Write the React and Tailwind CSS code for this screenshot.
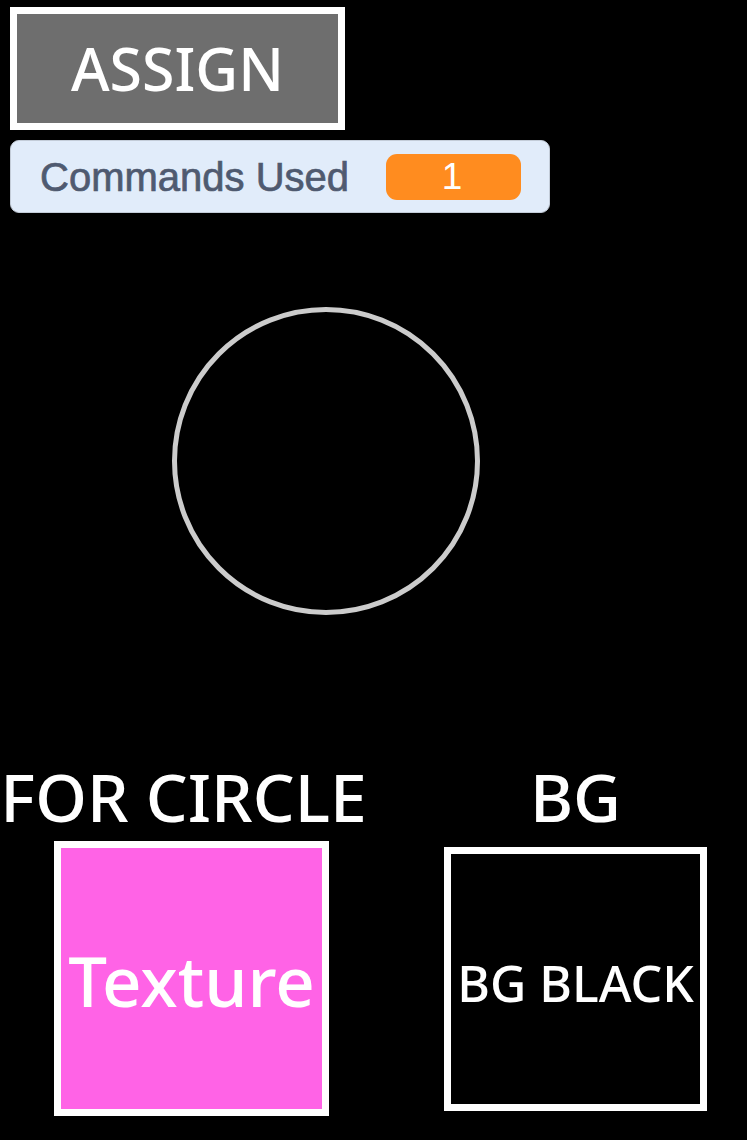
import React from 'react';

const display = { fontFamily: '"Noto Sans", "Open Sans", sans-serif' };

// bloc d'action en haut
function AssignButton() {
  return (
    <button
      className="ml-[10px] mt-[7px] flex h-[123px] w-[335px] items-center justify-center border-[7px] border-white bg-[#6e6e6e] text-[59px] font-medium leading-none text-white"
      style={display}
    >
      ASSIGN
    </button>
  );
}

function CommandsUsed({ count }) {
  return (
    <div
      className="ml-[10px] mt-[10px] flex h-[73px] w-[540px] items-center rounded-[9px] border border-[#c3ccd8] bg-[#e1ecfa] pl-[29px]"
      style={{ fontFamily: '"Liberation Sans", Arial, sans-serif' }}
    >
      <span className="text-[40px] leading-none text-[#4f5a70] [-webkit-text-stroke:0.7px_#4f5a70]">Commands Used</span>
      <span className="ml-[37px] flex h-[46px] w-[135px] items-center justify-center rounded-[11px] bg-[#ff8c1f] pr-[3px] text-[37px] leading-none text-white">
        {count}
      </span>
    </div>
  );
}

export default function App() {
  return (
    <div className="flex min-h-[1140px] w-full flex-col overflow-hidden bg-black">
      <AssignButton />
      <CommandsUsed count={1} />

      {/* le cercle */}
      <div className="ml-[172px] mt-[94px] h-[308px] w-[308px]">
        <svg width="308" height="308" viewBox="0 0 308 308">
          <circle cx="154" cy="154" r="151.5" fill="none" stroke="#cccccc" strokeWidth="5" />
        </svg>
      </div>

      <div className="mt-[148px] flex items-start font-medium" style={display}>
        <div className="ml-[54px] flex w-[275px] flex-col items-center">
          <div className="-ml-[16px] whitespace-nowrap text-[66px] leading-none text-white">FOR CIRCLE</div>
          <div className="mt-[12px] flex h-[275px] w-[275px] items-center justify-center border-[7px] border-white bg-[#ff63e6] pt-[4px]">
            <span className="whitespace-nowrap text-[69px] leading-none text-white">Texture</span>
          </div>
        </div>
        <div className="ml-[115px] flex w-[263px] flex-col items-center">
          <div className="whitespace-nowrap text-[66px] leading-none text-white">BG</div>
          <div className="mt-[18px] flex h-[264px] w-[263px] items-center justify-center border-[7px] border-white bg-black pt-[8px]">
            <span className="whitespace-nowrap text-[50px] leading-none text-white">BG BLACK</span>
          </div>
        </div>
      </div>
    </div>
  );
}
